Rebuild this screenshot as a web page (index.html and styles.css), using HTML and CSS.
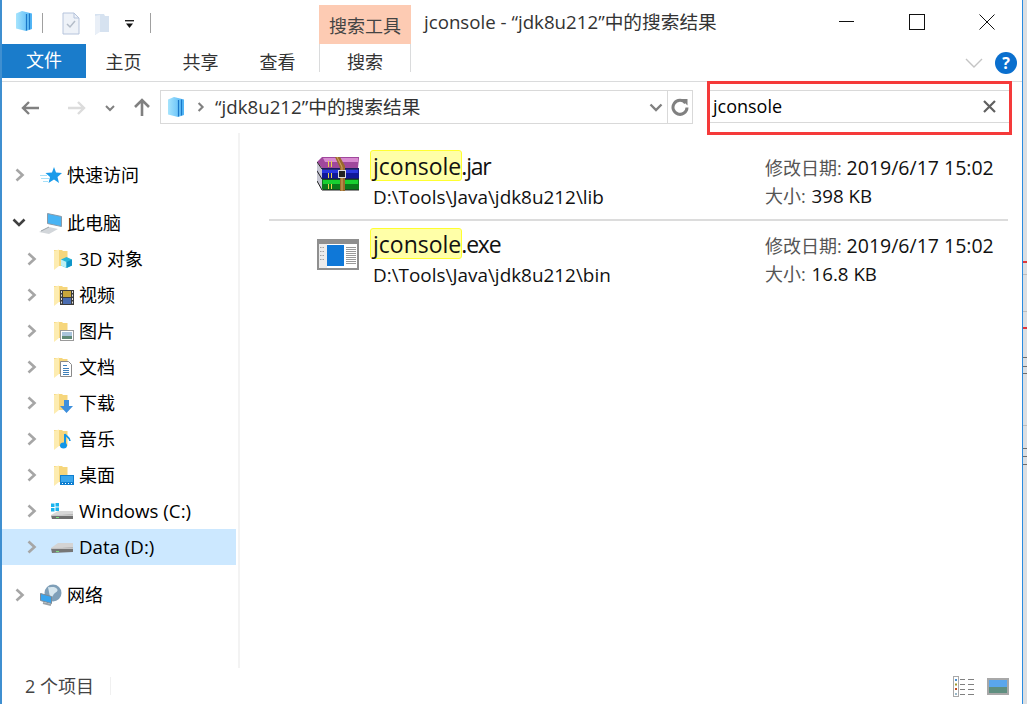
FILE: index.html
```html
<!DOCTYPE html>
<html lang="zh-CN">
<head>
<meta charset="utf-8">
<title>jconsole</title>
<link rel="stylesheet" href="styles.css">
</head>
<body>
<svg class="defs" width="0" height="0" aria-hidden="true">
  <defs>
    <linearGradient id="lib" x1="0" y1="0" x2="1" y2="0"><stop offset="0" stop-color="#a6e4fd"/><stop offset="1" stop-color="#4fb4f6"/></linearGradient>
    <symbol id="chev" viewBox="0 0 10 14"><path d="M1.500 1.500L7.500 7l-6 5.500" fill="none" stroke="#a6a6a6" stroke-width="2.600"/></symbol>
    <symbol id="chevd" viewBox="0 0 14 10"><path d="M1.500 1.500L7 7l5.500-5.500" fill="none" stroke="#404040" stroke-width="2.600"/></symbol>
    <symbol id="libicon" viewBox="0 0 16 20"><path d="M0 2.500L6 0l10 2.500V18l-6 2-10-2.500z" fill="url(#lib)"/><path d="M10.500 3v16.500M13.500 2.500V18.500" stroke="#1b78c8" stroke-width="1.200"/></symbol>
    <symbol id="folder" viewBox="0 0 14 21"><path d="M0 1h8l1 1h4.500v15H0z" fill="#f6d67c"/><path d="M0 2l5-1.500V17l-5 4z" fill="#fdecb0"/></symbol>
  </defs>
</svg>
<div class="window">
  <header class="titlebar">
    <div class="qat">
      <svg class="qi-lib" width="16" height="20"><use href="#libicon"/></svg>
      <span class="qsep"></span>
      <svg class="qi-doc" width="18" height="23" viewBox="0 0 18 23"><path d="M1 1h11l5 5v16H1z" fill="#eef2f8" stroke="#b6c4dc"/><path d="M12 1v5h5" fill="none" stroke="#b6c4dc"/><path d="M5 12l3 3 5-6" fill="none" stroke="#b4bdc9" stroke-width="1.500"/></svg>
      <svg class="qi-fold" width="15" height="22" viewBox="0 0 15 22"><path d="M0 1h9l1 2h4v16H4l-4 3z" fill="#d6e2f0"/><path d="M0 3l5-1v17l-5 3z" fill="#e9eff7"/></svg>
      <svg class="qi-drop" width="9" height="9" viewBox="0 0 9 9"><path d="M0 0h9v1.400H0z" fill="#222"/><path d="M1 3.500h7L4.500 8z" fill="#111"/></svg>
      <span class="qsep sep2"></span>
    </div>
    <div class="ctx-head">搜索工具</div>
    <div class="win-title">jconsole - “jdk8u212”中的搜索结果</div>
    <div class="win-btns">
      <svg width="16" height="16" viewBox="0 0 16 16"><path d="M0 7.500h15" stroke="#111" stroke-width="1"/></svg>
      <svg width="16" height="16" viewBox="0 0 16 16"><rect x=".5" y=".5" width="15" height="15" fill="none" stroke="#111"/></svg>
      <svg width="16" height="16" viewBox="0 0 16 16"><path d="M.5.500l15 15M15.500.500l-15 15" stroke="#111" stroke-width="1"/></svg>
    </div>
  </header>

  <nav class="ribbon">
    <div class="file-tab">文件</div>
    <div class="tab t1">主页</div>
    <div class="tab">共享</div>
    <div class="tab">查看</div>
    <div class="tab ctx-tab">搜索</div>
    <div class="ribbon-end">
      <svg width="18" height="10" viewBox="0 0 18 10"><path d="M1 1l8 8 8-8" fill="none" stroke="#c4c4c4" stroke-width="1.400"/></svg>
      <span class="help">?</span>
    </div>
  </nav>

  <div class="addressbar">
    <svg class="nav-back" width="20" height="16" viewBox="0 0 20 16"><path d="M19 8H3M9 2L3 8l6 6" fill="none" stroke="#808080" stroke-width="2.400"/></svg>
    <svg class="nav-fwd" width="20" height="16" viewBox="0 0 20 16"><path d="M1 8h16M11 2l6 6-6 6" fill="none" stroke="#dcdcdc" stroke-width="2.400"/></svg>
    <svg class="nav-down" width="10" height="7" viewBox="0 0 10 7"><path d="M1 1l4 4 4-4" fill="none" stroke="#808080" stroke-width="2"/></svg>
    <svg class="nav-up" width="18" height="18" viewBox="0 0 18 18"><path d="M9 18V3M2 9l7-7 7 7" fill="none" stroke="#808080" stroke-width="2.600"/></svg>
    <div class="crumb">
      <svg class="crumb-lib" width="16" height="20"><use href="#libicon"/></svg>
      <svg class="crumb-sep" width="8" height="12" viewBox="0 0 10 14"><path d="M2 2l5 5-5 5" fill="none" stroke="#808080" stroke-width="2.600"/></svg>
      <span class="crumb-text">“jdk8u212”中的搜索结果</span>
      <span class="crumb-drop"><svg width="14" height="9" viewBox="0 0 14 9"><path d="M1.500 1.500L7 7l5.500-5.500" fill="none" stroke="#808080" stroke-width="2.400"/></svg></span>
      <span class="crumb-refresh"><svg width="18" height="18" viewBox="0 0 18 18"><path d="M14.500 5A7 7 0 1 0 16 9.500" fill="none" stroke="#808080" stroke-width="3"/><path d="M10 1h6.500v6.500z" fill="#808080"/></svg></span>
    </div>
    <div class="search">
      <span class="search-text">jconsole</span>
      <svg width="13" height="13" viewBox="0 0 13 13"><path d="M1 1l11 11M12 1L1 12" stroke="#606060" stroke-width="2.200"/></svg>
    </div>
  </div>

  <div class="red-mark"></div>

  <main class="main">
    <aside class="sidebar">
      <div class="group">
        <div class="node n1">
          <svg class="chev" width="10" height="14"><use href="#chev"/></svg>
          <svg class="ico" width="22" height="22" viewBox="0 0 22 22"><path d="M14 3l2 5.500 6 .5-4.500 4 1.500 6-5-3.500L8.500 19l1.500-6L5.500 9l6.500-.5z" fill="#1a9bea"/><path d="M0 11.500h7M1 14.500h8M3 17.500h5" stroke="#a6e0f8"/></svg>
          <span>快速访问</span>
        </div>
      </div>
      <div class="group">
        <div class="node n1">
          <svg class="chev chevd" width="14" height="10"><use href="#chevd"/></svg>
          <svg class="ico" width="24" height="22" viewBox="0 0 24 22"><path d="M8.500 1.500l14 3v10l-14-3z" fill="#48b4f4" stroke="#8a9aa8"/><path d="M0 20l10-5 9 2-9 5z" fill="#d2d6da"/><path d="M2 19l8-4" stroke="#9aa2a8"/></svg>
          <span>此电脑</span>
        </div>
        <div class="node n2"><svg class="chev" width="10" height="14"><use href="#chev"/></svg><span class="fi"><svg width="14" height="21"><use href="#folder"/></svg><svg class="ov" width="13" height="13" viewBox="0 0 13 13"><path d="M6.500 1L12 3.500v6L6.500 12 1 9.500v-6z" fill="#29b6d8"/><path d="M1 3.500L6.500 6v6L1 9.500z" fill="#bdf0f4"/><path d="M6.500 6L12 3.500v6L6.500 12z" fill="#0f96c8"/></svg></span><span>3D 对象</span></div>
        <div class="node n2"><svg class="chev" width="10" height="14"><use href="#chev"/></svg><span class="fi"><svg width="14" height="21"><use href="#folder"/></svg><svg class="ov" width="14" height="15" viewBox="0 0 14 15"><rect width="14" height="15" fill="#3c3c3c"/><rect x="3" y="1" width="8" height="6" fill="#c8a63c"/><rect x="3" y="8" width="8" height="6" fill="#4a6cb0"/><path d="M1.500 1v13M12.500 1v13" stroke="#ddd" stroke-dasharray="2 1.500"/></svg></span><span>视频</span></div>
        <div class="node n2"><svg class="chev" width="10" height="14"><use href="#chev"/></svg><span class="fi"><svg width="14" height="21"><use href="#folder"/></svg><svg class="ov" width="14" height="11" viewBox="0 0 14 11"><rect x=".5" y=".5" width="13" height="10" fill="#fff" stroke="#9a9a9a"/><rect x="2" y="2" width="10" height="4" fill="#a9c4dc"/><rect x="2" y="6" width="10" height="3" fill="#5f8a78"/></svg></span><span>图片</span></div>
        <div class="node n2"><svg class="chev" width="10" height="14"><use href="#chev"/></svg><span class="fi"><svg width="14" height="21"><use href="#folder"/></svg><svg class="ov" width="12" height="16" viewBox="0 0 12 16"><path d="M.5.500h8l3 3v12H.5z" fill="#fff" stroke="#8a8a8a"/><path d="M3 4.500h4M3 7.500h6M3 9.500h6M3 11.500h6M3 13.500h6" stroke="#3f7fb8"/></svg></span><span>文档</span></div>
        <div class="node n2"><svg class="chev" width="10" height="14"><use href="#chev"/></svg><span class="fi"><svg width="14" height="21"><use href="#folder"/></svg><svg class="ov" width="13" height="13" viewBox="0 0 13 13"><path d="M4 0h5v6h4l-6.500 7L0 6h4z" fill="#3d8fdc"/></svg></span><span>下载</span></div>
        <div class="node n2"><svg class="chev" width="10" height="14"><use href="#chev"/></svg><span class="fi"><svg width="14" height="21"><use href="#folder"/></svg><svg class="ov" width="11" height="16" viewBox="0 0 11 16"><path d="M5 1v11" stroke="#1296e8" stroke-width="2"/><ellipse cx="3.500" cy="12.500" rx="3.500" ry="3" fill="#1296e8"/><path d="M5 1c1 3 5 3 5 7" fill="none" stroke="#1296e8" stroke-width="1.600"/></svg></span><span>音乐</span></div>
        <div class="node n2"><svg class="chev" width="10" height="14"><use href="#chev"/></svg><span class="fi"><svg width="14" height="21"><use href="#folder"/></svg><svg class="ov" width="14" height="10" viewBox="0 0 14 10"><rect width="14" height="10" fill="#0f7fd0"/><rect x="1" y="1" width="12" height="6" fill="#3aa6ec"/><path d="M2 8.500h1M5 8.500h1M8 8.500h1M11 8.500h1" stroke="#fff"/></svg></span><span>桌面</span></div>
        <div class="node n2"><svg class="chev" width="10" height="14"><use href="#chev"/></svg><span class="fi fi-drive"><svg width="22" height="16" viewBox="0 0 22 16"><path d="M0 12l7-4h15v5H0z" fill="#d8d8d8"/><path d="M0 12.500l22-1V16H1z" fill="#707070"/><path d="M0 12l22-.5v1.500H0z" fill="#c8c8c8"/><path d="M0 .5h3.500V4H0zM4.500 0H8v3.500H4.500zM0 5h3.500v3.500H0zM4.500 4.500H8V8H4.500z" fill="#19b4ee"/><path d="M5 14.500h3" stroke="#7de07d"/></svg></span><span class="lat">Windows (C:)</span></div>
        <div class="node n2 selected"><svg class="chev" width="10" height="14"><use href="#chev"/></svg><span class="fi fi-drive"><svg width="22" height="12" viewBox="0 0 22 12"><path d="M0 7l7-5h15v5H0z" fill="#d4d4d4"/><path d="M0 7.500l22-1V11L1 12z" fill="#767676"/><path d="M0 7l22-.5V8H0z" fill="#c4c4c4"/><path d="M5 10.500h3" stroke="#7de07d"/></svg></span><span class="lat">Data (D:)</span></div>
      </div>
      <div class="group">
        <div class="node n1">
          <svg class="chev" width="10" height="14"><use href="#chev"/></svg>
          <svg class="ico" width="22" height="22" viewBox="0 0 22 22"><circle cx="13" cy="9" r="8.500" fill="#7f9fb8"/><path d="M8 3c3 1 5-1 8 1s1 4-1 5-2 5-5 4z" fill="#d6e6ee"/><path d="M.5 9.500l11 3v7l-11-3z" fill="#38a4ee" stroke="#7c8a96"/><path d="M3 19l8 2" stroke="#9aa2a8" stroke-width="2"/></svg>
          <span>网络</span>
        </div>
      </div>
    </aside>

    <section class="results">
      <article class="result">
        <svg class="file-ico" width="43" height="34" viewBox="0 0 43 34">
          <path d="M0 5l5-5h37v1l-1 10H5z" fill="#a0489c"/><path d="M6 1h35v4H8z" fill="#d88ad0"/>
          <path d="M0 13l5-2h37v11H5z" fill="#101898"/><path d="M5 12h36v4H5z" fill="#2a38e0"/>
          <path d="M0 24l5-2h37v11H6z" fill="#0a7a1a"/><path d="M6 23h35v4H6z" fill="#18d030"/>
          <path d="M0 5l5 7v10L0 13zM0 14l5 8v11l-5-9z" fill="#c8c8d4"/><path d="M0 5l5 7h37M0 14l5 8h37M0 24l5 9h37" fill="none" stroke="#222" stroke-width="1"/>
          <path d="M11.500 4v6M14.500 4v6M11.500 16v5M14.500 16v5M11.500 27v5M14.500 27v5" stroke="#e8d44c"/>
          <path d="M18 0h5l5 9v25h-5V11z" fill="#9a6a2c"/><path d="M20 0l5 10v24" fill="none" stroke="#d0a860"/><rect x="21.500" y="13.500" width="7" height="7" fill="#222" stroke="#ddd"/>
        </svg>
        <div class="file-info">
          <div class="file-name"><mark>jconsole</mark><span>.jar</span></div>
          <div class="file-path">D:\Tools\Java\jdk8u212\lib</div>
        </div>
        <div class="file-meta">
          <div><span class="key">修改日期:</span> <span class="date">2019/6/17 15:02</span></div>
          <div><span class="key key-size">大小:</span> 398 KB</div>
        </div>
      </article>
      <article class="result">
        <svg class="file-ico" width="43" height="32" viewBox="0 0 43 32">
          <rect x="1" y="1" width="40" height="29" fill="#fff" stroke="#8f8f8f" stroke-width="2"/><rect x="1" y="1" width="40" height="4" fill="#8f8f8f"/>
          <rect x="2" y="5" width="8" height="24" fill="#ececec"/>
          <rect x="10" y="6" width="17" height="21" fill="#0f78d8"/>
          <path d="M29 8.500h10M29 10.500h10M29 12.500h10M29 14.500h10M29 16.500h10M29 18.500h10M29 20.500h10M29 22.500h10M29 24.500h10" stroke="#9a9a9a"/>
          <path d="M3 8.500h5M3 12.500h5M3 16.500h5M3 20.500h5" stroke="#a0a0a0" stroke-dasharray="1.500 1"/>
        </svg>
        <div class="file-info">
          <div class="file-name"><mark>jconsole</mark><span>.exe</span></div>
          <div class="file-path">D:\Tools\Java\jdk8u212\bin</div>
        </div>
        <div class="file-meta">
          <div><span class="key">修改日期:</span> <span class="date">2019/6/17 15:02</span></div>
          <div><span class="key key-size">大小:</span> 16.8 KB</div>
        </div>
      </article>
    </section>
  </main>

  <footer class="statusbar">
    <span class="count">2 个项目</span>
    <span class="view-btns">
      <svg width="22" height="21" viewBox="0 0 22 21"><rect x=".5" y=".5" width="5" height="20" fill="#fff" stroke="#a8a8a8"/><path d="M2 4h2" stroke="#4a8fd0" stroke-width="2"/><path d="M2 8.500h2" stroke="#a09a30" stroke-width="2"/><path d="M2 13h2" stroke="#c04a20" stroke-width="2"/><path d="M2 18h2" stroke="#9ab8c8" stroke-width="2"/><path d="M7 3.500h5M15 3.500h6M7 8.500h5M15 8.500h6M7 13.500h5M15 13.500h6M7 18.500h5M15 18.500h6" stroke="#808080"/></svg>
      <svg width="22" height="17" viewBox="0 0 22 17"><rect x="1" y="1" width="20" height="15" fill="#fff" stroke="#a8a8a8" stroke-width="2"/><rect x="2" y="2" width="18" height="7" fill="#5aa6ec"/><rect x="2" y="9" width="18" height="6" fill="#5f8f80"/></svg>
    </span>
  </footer>
</div>
<div class="edge"></div>
</body>
</html>
```

FILE: styles.css
```css
* { box-sizing: border-box; }
html, body { margin: 0; height: 100%; overflow: hidden; background: #fff; }
body { position: relative; font-family: "Open Sans", "Noto Sans CJK SC", sans-serif; font-size: 18px; color: #000; }
.defs { position: absolute; }
svg { display: block; flex: none; }

.window { width: 1023px; height: 704px; border-left: 2px solid #3f8fd0; border-right: 1px solid #2a8be0; display: flex; flex-direction: column; background: #fff; }

.titlebar { height: 44px; display: flex; }
.qat { width: 317px; display: flex; align-items: center; padding-left: 14px; }
.qi-lib { margin-top: -2px; }
.qsep { width: 1px; height: 20px; background: #a0a0a0; margin-left: 10px; margin-top: 2px; }
.qi-doc { margin-left: 19px; margin-top: 2px; }
.qi-fold { margin-left: 15px; margin-top: 3px; }
.qi-drop { margin-left: 15px; margin-top: 5px; }
.sep2 { margin-left: 16px; }
.ctx-head { width: 92px; margin-top: 5px; background: #fdcbb3; color: #444; text-align: center; line-height: 42px; height: 39px; font-size: 18px; }
.win-title { margin-left: 13px; line-height: 44px; color: #333; flex: 1; white-space: nowrap; font-size: 18.7px; }
.win-btns { display: flex; gap: 54px; padding: 14px 27px 0 0; }

.ribbon { height: 38px; border-bottom: 1px solid #dadbdc; display: flex; position: relative; }
.file-tab { width: 84px; height: 34px; background: #1a7ccb; color: #fff; text-align: center; line-height: 32px; }
.tab { width: 77px; height: 34px; line-height: 36px; text-align: center; color: #333; }
.t1 { margin-left: -1px; }
.ctx-tab { width: 92px; height: 28px; margin-left: 3px; border-left: 1px solid #dadbdc; border-right: 1px solid #dadbdc; }
.ribbon-end { flex: 1; display: flex; align-items: center; justify-content: flex-end; gap: 12px; padding: 0 5px 0 0; }
.help { width: 22px; height: 22px; border-radius: 50%; background: #0a6fce; color: #fff; font-weight: 700; font-size: 16px; text-align: center; line-height: 22px; }

.addressbar { height: 51px; display: flex; align-items: flex-start; padding-top: 8px; position: relative; }
.nav-back { margin: 10px 0 0 18px; }
.nav-fwd { margin: 10px 0 0 27px; }
.nav-down { margin: 15px 0 0 18px; }
.nav-up { margin: 8px 0 0 18px; }
.crumb { width: 533px; height: 34px; margin-left: 9px; border: 1px solid #d9d9d9; display: flex; align-items: center; padding-left: 7px; }
.crumb-sep { margin-left: 13px; }
.crumb-text { margin-left: 10px; margin-bottom: 3px; color: #333; flex: 1; white-space: nowrap; font-size: 18.7px; }
.crumb-drop { width: 22px; height: 32px; display: flex; align-items: center; justify-content: center; }
.crumb-refresh { width: 25px; height: 32px; display: flex; align-items: center; justify-content: center; border-left: 1px solid #d9d9d9; }
.search { width: 302px; height: 33px; margin-left: 15px; border-top: 1px solid #d9d9d9; border-bottom: 1px solid #d9d9d9; border-left: 1px solid #d9d9d9; display: flex; align-items: center; justify-content: space-between; padding: 0 14px 0 4px; }
.search-text { margin-bottom: 2px; }

.red-mark { position: absolute; left: 707px; top: 81px; width: 305px; height: 54px; border: 3px solid #f53a3a; }

.main { flex: 1; display: flex; min-height: 0; }
.sidebar { width: 238px; border-right: 2px solid #f3f3f3; padding-top: 24px; display: flex; flex-direction: column; gap: 12px; }
.node { height: 36px; display: flex; align-items: center; white-space: nowrap; color: #000; }
.node > span:last-child { margin-bottom: 2px; }
.n1 { padding-left: 13px; }
.n1 .ico { margin-left: 15px; margin-right: 5px; }
.n1 .chevd { margin-left: -3px; }
.n1 .chevd + .ico { margin-left: 13px; margin-right: 4px; }
.n2 { padding-left: 25px; width: 234px; }
.fi { width: 25px; margin-left: 17px; position: relative; display: block; height: 21px; }
.fi .ov { position: absolute; left: 6px; bottom: 1px; }
.fi-drive { width: 28px; margin-left: 14px; height: auto; }
.lat { font-size: 18.7px; }
.selected { background: #cce8ff; }

.results { flex: 1; padding: 7px 14px 0 29px; }
.result { height: 79px; display: flex; position: relative; padding-left: 48px; }
.result + .result { border-top: 2px solid #dcdcdc; }
.file-ico { position: absolute; left: 48px; top: 17px; }
.result + .result .file-ico { top: 18px; }
.file-info { width: 448px; padding-left: 53px; }
.file-name { font-size: 23px; line-height: 31px; margin-top: 10px; white-space: nowrap; }
.result + .result .file-name { margin-top: 7px; }
.file-name mark { background: #ffffa8; border: 1px solid #ffff30; border-radius: 3px; color: #111; padding: 0 0 0 2px; margin-right: -1px; display: inline-block; height: 31px; line-height: 30px; }
.file-name span { color: #111; letter-spacing: -1.2px; }
.file-path { color: #111; line-height: 30px; margin-left: 3px; font-size: 18.9px; white-space: nowrap; }
.file-meta { line-height: 28px; margin-top: 14px; color: #111; white-space: nowrap; font-size: 18.7px; }
.result + .result .file-meta { margin-top: 11px; }
.key { color: #555; font-size: 18px; }
.key-size { margin-right: 1px; }
.date { font-size: 19.5px; }

.statusbar { height: 36px; display: flex; align-items: center; justify-content: space-between; padding: 0 13px 0 23px; color: #444; }
.count { padding-right: 16px; border-right: 1px solid #f0f0f0; line-height: 18px; }
.view-btns { display: flex; align-items: center; gap: 12px; }

.edge {
  position: absolute; left: 1023px; top: 0; width: 4px; height: 704px;
  background:
    linear-gradient(#e0383c, #e0383c) 0 261px / 100% 2px no-repeat,
    linear-gradient(#e0383c, #e0383c) 0 327px / 100% 2px no-repeat,
    linear-gradient(#bdbdbd, #bdbdbd) 0 274px / 100% 1px no-repeat,
    linear-gradient(#bdbdbd, #bdbdbd) 0 311px / 100% 1px no-repeat,
    linear-gradient(#6e6e6e, #6e6e6e) 0 357px / 100% 1px no-repeat,
    linear-gradient(#6e6e6e, #6e6e6e) 0 366px / 100% 1px no-repeat,
    linear-gradient(#6e6e6e, #6e6e6e) 0 373px / 100% 1px no-repeat,
    linear-gradient(#bdbdbd, #bdbdbd) 0 425px / 100% 1px no-repeat,
    linear-gradient(#6e6e6e, #6e6e6e) 0 448px / 100% 1px no-repeat,
    linear-gradient(#6e6e6e, #6e6e6e) 0 456px / 100% 1px no-repeat,
    linear-gradient(#6e6e6e, #6e6e6e) 0 464px / 100% 1px no-repeat,
    #dcdfe2;
}
```
